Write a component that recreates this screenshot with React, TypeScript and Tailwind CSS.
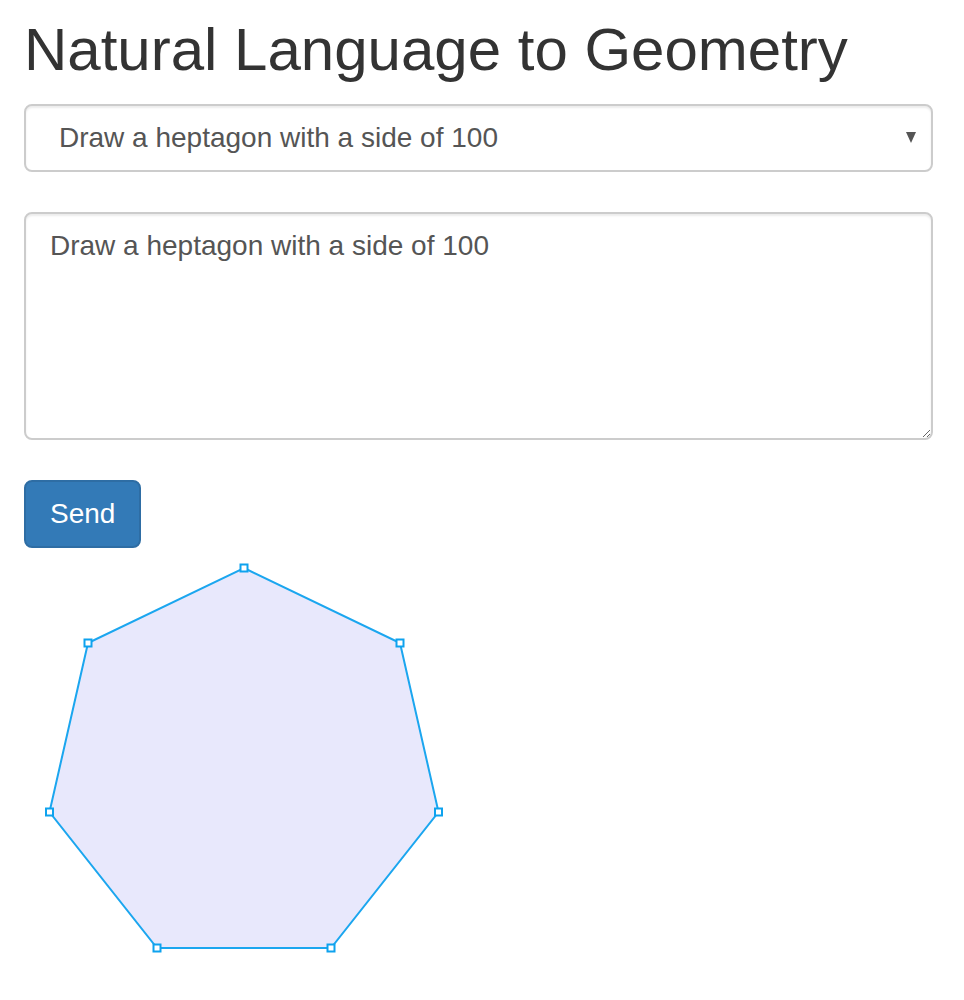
import React from 'react';

const points: [number, number][] = [
  [220, 13],
  [376, 88],
  [414.5, 257],
  [307, 393],
  [133, 393],
  [25.5, 257],
  [64, 88],
];

const Heptagon: React.FC = () => {
  const d = points.map((p) => p.join(',')).join(' ');
  return (
    <svg width={440} height={410} className="block mt-[7px]">
      <polygon points={d} fill="#e8e8fc" stroke="#1ba6ef" strokeWidth={2} strokeLinejoin="miter" />
      {points.map(([x, y], i) => (
        <rect key={i} x={x - 3.5} y={y - 3.5} width={7} height={7} fill="#ffffff" stroke="#0ea2ee" strokeWidth={2} />
      ))}
    </svg>
  );
};

export default function App() {
  const [query, setQuery] = React.useState('Draw a heptagon with a side of 100');

  return (
    <div className="min-h-screen bg-white px-6 font-['Liberation_Sans',Arial,sans-serif]">
      {/* Title */}
      <h1 className="mt-[17px] text-[60px] leading-[66px] font-normal text-[#333333]">
        Natural Language to Geometry
      </h1>

      {/* Example picker */}
      <div className="relative mt-[21px] w-[909px]">
        <select
          value={query}
          onChange={(e) => setQuery(e.target.value)}
          className="block h-[68px] w-full appearance-none rounded-lg border-2 border-[#cccccc] bg-white pl-[33px] pr-12 text-[28px] text-[#555555] shadow-[inset_0_2px_2px_rgba(0,0,0,0.075)] outline-none"
        >
          <option>Draw a heptagon with a side of 100</option>
          <option>Draw a square with a side of 50</option>
          <option>Draw a circle with a radius of 80</option>
        </select>
        <svg width="10" height="11" viewBox="0 0 10 11" className="pointer-events-none absolute right-[17px] top-[28px]">
          <polygon points="0,0 10,0 5,11" fill="#555555" />
        </svg>
      </div>

      {/* Query text */}
      <textarea
        value={query}
        onChange={(e) => setQuery(e.target.value)}
        className="mt-10 block h-[228px] w-[909px] rounded-lg border-2 border-[#cccccc] bg-white px-6 py-3 text-[28px] leading-[40px] text-[#555555] shadow-[inset_0_2px_2px_rgba(0,0,0,0.075)] outline-none"
      />

      <button className="mt-10 block h-[68px] rounded-lg border-2 border-[#2e6da4] bg-[#337ab7] px-6 text-[28px] leading-[40px] text-white">
        Send
      </button>

      <Heptagon />
    </div>
  );
}
